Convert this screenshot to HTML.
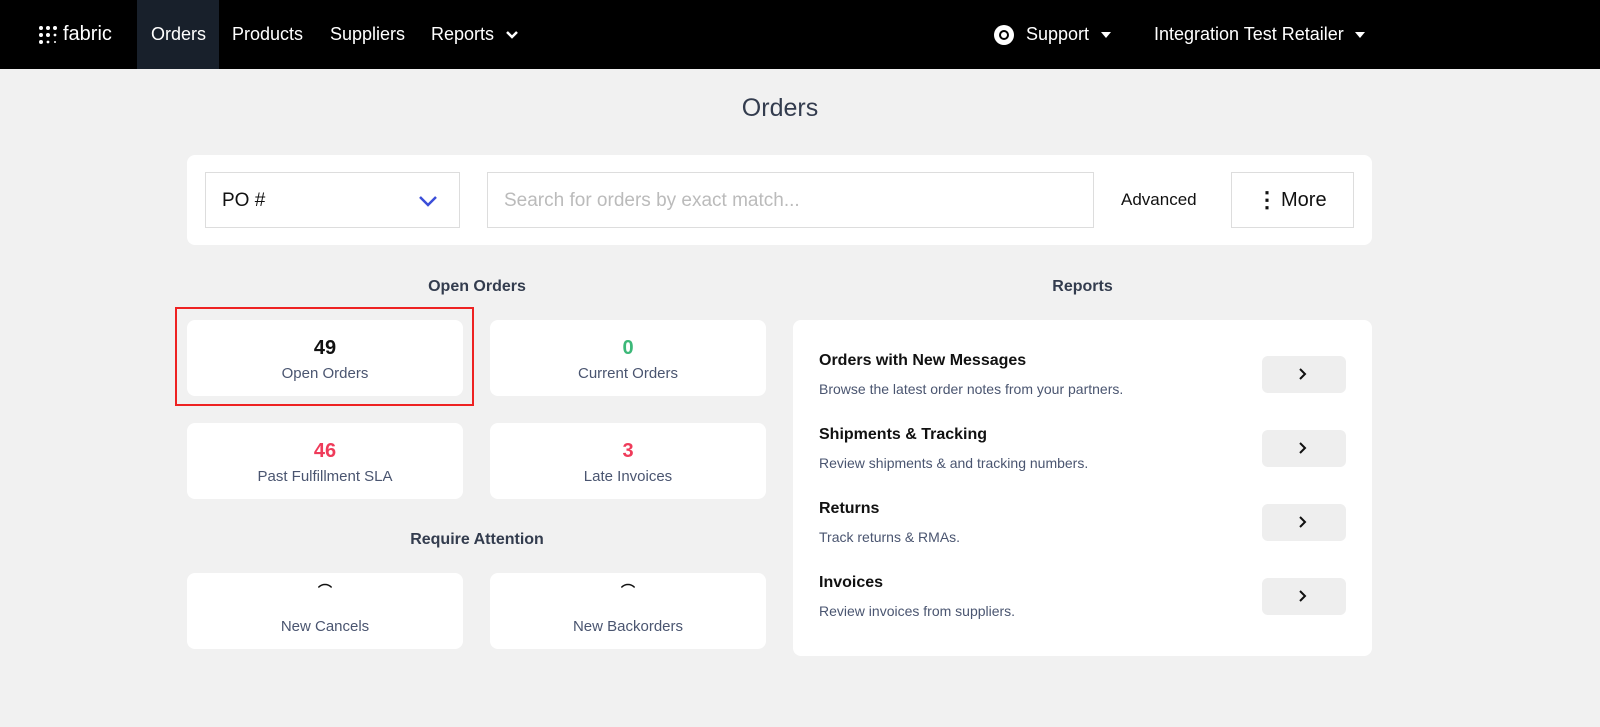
<!DOCTYPE html>
<html><head><style>
*{box-sizing:border-box;margin:0;padding:0}
body{width:1600px;height:727px;background:#f1f1f1;font-family:"Liberation Sans",sans-serif;position:relative;overflow:hidden;color:#111}
.nav{position:absolute;left:0;top:0;width:1600px;height:69px;background:#000;color:#fff;font-size:18px}
.nav span{position:absolute;top:24px}
.abs{position:absolute}
.card{position:absolute;background:#fff;border-radius:8px}
.tile{position:absolute;background:#fff;border-radius:8px;width:276px;height:76px;text-align:center}
.tile .n{position:absolute;top:17px;width:100%;font-size:20px;font-weight:bold}
.tile .l{position:absolute;top:45px;width:100%;font-size:15px;color:#4a5570}
.h{position:absolute;font-size:16px;font-weight:bold;color:#333c4e;text-align:center}
.rt{position:absolute;left:819px;font-size:16px;font-weight:bold}
.rd{position:absolute;left:819px;font-size:14px;color:#4a5570}
.btn{position:absolute;left:1262px;width:84px;height:37px;background:#eee;border-radius:6px}
.btn svg{position:absolute;left:36px;top:11px}
</style></head><body>
<div class="nav">
<svg class="abs" style="left:38px;top:25px" width="24" height="20"><g fill="#fff"><circle cx="3" cy="3" r="2"/><circle cx="10" cy="3" r="2"/><circle cx="17" cy="3" r="2"/><circle cx="3" cy="10" r="2"/><circle cx="10" cy="10" r="2"/><circle cx="17" cy="10" r="1.4"/><circle cx="3" cy="17" r="2"/><circle cx="10" cy="17" r="1.4"/><circle cx="17" cy="17" r="1"/></g></svg>
<span style="left:63px;font-size:20px;top:23px">fabric</span>
<div class="abs" style="left:137px;top:0;width:82px;height:69px;background:#18202b"></div>
<span style="left:151px">Orders</span>
<span style="left:232px">Products</span>
<span style="left:330px">Suppliers</span>
<span style="left:431px">Reports</span>
<svg class="abs" style="left:505px;top:30px" width="14" height="10"><path d="M2 2l5 5 5-5" stroke="#fff" stroke-width="2.5" fill="none"/></svg>
<svg class="abs" style="left:992px;top:23px" width="24" height="24"><circle cx="12" cy="12" r="10" fill="#fff"/><circle cx="12" cy="12" r="5" fill="#000"/><circle cx="12" cy="12" r="3" fill="#fff"/></svg>
<span style="left:1026px">Support</span>
<svg class="abs" style="left:1100px;top:31px" width="12" height="8"><path d="M1 1h10L6 7z" fill="#fff"/></svg>
<span style="left:1154px">Integration Test Retailer</span>
<svg class="abs" style="left:1354px;top:31px" width="12" height="8"><path d="M1 1h10L6 7z" fill="#fff"/></svg>
</div>
<div class="abs" style="left:0;top:94px;width:1560px;text-align:center;font-size:25px;color:#333c4e">Orders</div>
<div class="card" style="left:187px;top:155px;width:1185px;height:90px"></div>
<div class="abs" style="left:205px;top:172px;width:255px;height:56px;border:1px solid #ddd;background:#fff"><span class="abs" style="left:16px;top:17px;font-size:19px">PO #</span>
<svg class="abs" style="left:212px;top:22px" width="20" height="12"><path d="M2 2l8 8 8-8" stroke="#3b4ed8" stroke-width="2.5" fill="none"/></svg></div>
<div class="abs" style="left:487px;top:172px;width:607px;height:56px;border:1px solid #ddd;background:#fff"><span class="abs" style="left:16px;top:17px;font-size:19px;color:#bbb">Search for orders by exact match...</span></div>
<span class="abs" style="left:1121px;top:190px;font-size:17px">Advanced</span>
<div class="abs" style="left:1231px;top:172px;width:123px;height:56px;border:1px solid #ddd;background:#fff"><span class="abs" style="left:24px;top:14px;font-size:22px;font-weight:bold">⋮</span><span class="abs" style="left:49px;top:16px;font-size:20px">More</span></div>
<div class="h" style="left:187px;width:580px;top:278px">Open Orders</div>
<div class="h" style="left:793px;width:579px;top:278px">Reports</div>
<div class="tile" style="left:187px;top:320px"><div class="n">49</div><div class="l">Open Orders</div></div>
<div class="abs" style="left:175px;top:307px;width:299px;height:99px;border:2px solid #e22"></div>
<div class="tile" style="left:490px;top:320px"><div class="n" style="color:#3cb878">0</div><div class="l">Current Orders</div></div>
<div class="tile" style="left:187px;top:423px"><div class="n" style="color:#ef3b5a">46</div><div class="l">Past Fulfillment SLA</div></div>
<div class="tile" style="left:490px;top:423px"><div class="n" style="color:#ef3b5a">3</div><div class="l">Late Invoices</div></div>
<div class="h" style="left:187px;width:580px;top:531px">Require Attention</div>
<div class="tile" style="left:187px;top:573px"><div class="n" style="top:8px;font-size:14px">⌒</div><div class="l">New Cancels</div></div>
<div class="tile" style="left:490px;top:573px"><div class="n" style="top:8px;font-size:14px">⌒</div><div class="l">New Backorders</div></div>
<div class="card" style="left:793px;top:320px;width:579px;height:336px"></div>
<div class="rt" style="top:352px">Orders with New Messages</div><div class="rd" style="top:381px">Browse the latest order notes from your partners.</div>
<div class="btn" style="top:356px"><svg width="10" height="14"><path d="M2 2l5 5-5 5" stroke="#111" stroke-width="2" fill="none"/></svg></div>
<div class="rt" style="top:426px">Shipments &amp; Tracking</div><div class="rd" style="top:455px">Review shipments &amp; and tracking numbers.</div>
<div class="btn" style="top:430px"><svg width="10" height="14"><path d="M2 2l5 5-5 5" stroke="#111" stroke-width="2" fill="none"/></svg></div>
<div class="rt" style="top:500px">Returns</div><div class="rd" style="top:529px">Track returns &amp; RMAs.</div>
<div class="btn" style="top:504px"><svg width="10" height="14"><path d="M2 2l5 5-5 5" stroke="#111" stroke-width="2" fill="none"/></svg></div>
<div class="rt" style="top:574px">Invoices</div><div class="rd" style="top:603px">Review invoices from suppliers.</div>
<div class="btn" style="top:578px"><svg width="10" height="14"><path d="M2 2l5 5-5 5" stroke="#111" stroke-width="2" fill="none"/></svg></div>
</body></html>
